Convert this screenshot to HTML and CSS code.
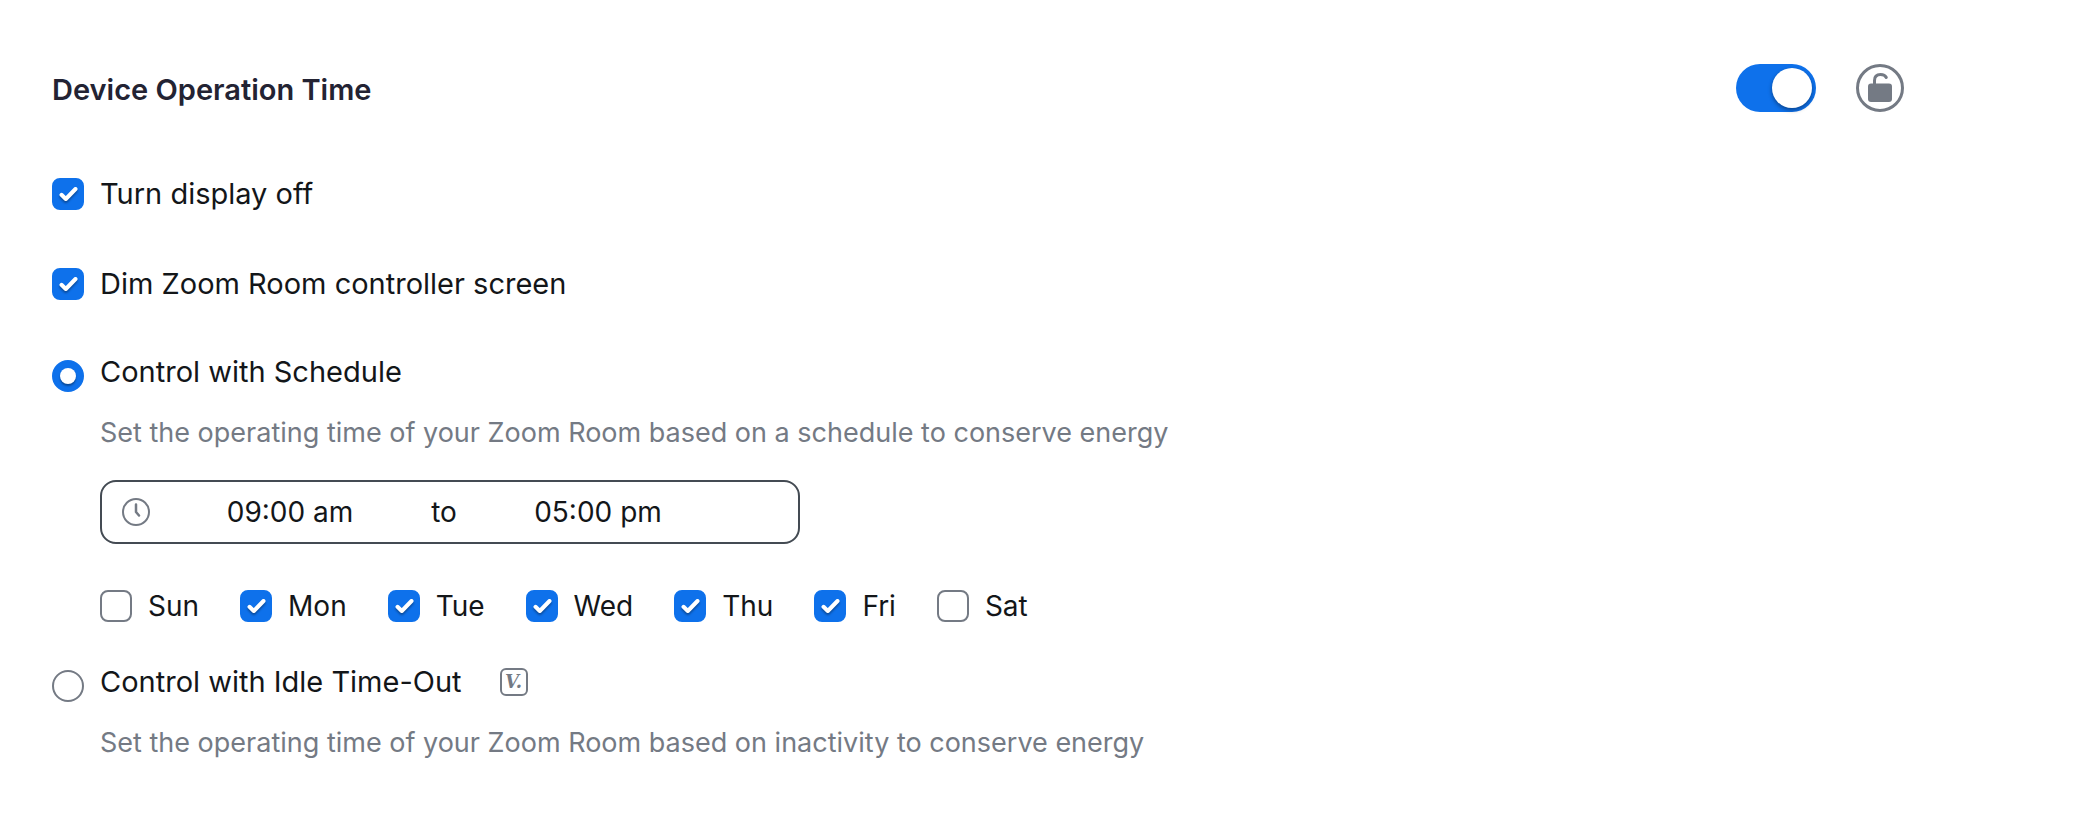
FILE: index.html
```
<!DOCTYPE html>
<html lang="en">
<head>
    <meta charset="UTF-8">
    <meta name="viewport" content="width=device-width, initial-scale=1.0">
    <title>Device Operation Time</title>
    <link rel="stylesheet" href="styles.css">
</head>
<body>
    <!-- check mark shared by all the tick boxes -->
    <svg class="sprite" aria-hidden="true">
        <symbol id="tick" viewBox="0 0 32 32">
            <path d="M9.5 16.8 L13.8 21 L23.5 11" fill="none" stroke="#fff" stroke-width="4" stroke-linecap="round" stroke-linejoin="round"/>
        </symbol>
    </svg>

    <main class="setting">
        <header class="setting-header">
            <h1 id="setting-title">Device Operation Time</h1>
            <div class="header-actions">
                <input type="checkbox" class="switch" role="switch" aria-labelledby="setting-title" checked>
                <button type="button" class="lock-button" aria-label="Unlocked">
                    <svg viewBox="0 0 48 48">
                        <circle cx="24" cy="24" r="22.5" fill="none" stroke="#747a84" stroke-width="3"/>
                        <rect x="12" y="19.5" width="24" height="18.5" rx="3" fill="#747a84"/>
                        <path d="M18.5 21 V16.5 C18.5 12.5 21 10.5 24.5 10.5 C27.5 10.5 29.5 11.8 30.3 13.5" fill="none" stroke="#747a84" stroke-width="3" stroke-linecap="round"/>
                    </svg>
                </button>
            </div>
        </header>

        <div class="options">
            <label class="option">
                <span class="box"><input type="checkbox" checked><svg class="tick"><use href="#tick"/></svg></span>
                Turn display off
            </label>
            <label class="option">
                <span class="box"><input type="checkbox" checked><svg class="tick"><use href="#tick"/></svg></span>
                Dim Zoom Room controller screen
            </label>
        </div>

        <section class="mode">
            <input type="radio" name="mode" id="mode-schedule" checked>
            <div class="mode-body">
                <label for="mode-schedule">Control with Schedule</label>
                <p>Set the operating time of your Zoom Room based on a schedule to conserve energy</p>
                <div class="time-range">
                    <svg class="clock" viewBox="0 0 28 28">
                        <g fill="none" stroke="#747a84" stroke-linecap="round" stroke-linejoin="round">
                            <circle cx="14" cy="14" r="13" stroke-width="2"/>
                            <path d="M14 6.5 V14 L17 17.5" stroke-width="2.5"/>
                        </g>
                    </svg>
                    <input type="text" value="09:00 am" aria-label="Start time">
                    <span class="to">to</span>
                    <input type="text" value="05:00 pm" aria-label="End time">
                </div>
                <div class="days">
                    <label class="option"><span class="box"><input type="checkbox"><svg class="tick"><use href="#tick"/></svg></span>Sun</label>
                    <label class="option"><span class="box"><input type="checkbox" checked><svg class="tick"><use href="#tick"/></svg></span>Mon</label>
                    <label class="option"><span class="box"><input type="checkbox" checked><svg class="tick"><use href="#tick"/></svg></span>Tue</label>
                    <label class="option"><span class="box"><input type="checkbox" checked><svg class="tick"><use href="#tick"/></svg></span>Wed</label>
                    <label class="option"><span class="box"><input type="checkbox" checked><svg class="tick"><use href="#tick"/></svg></span>Thu</label>
                    <label class="option"><span class="box"><input type="checkbox" checked><svg class="tick"><use href="#tick"/></svg></span>Fri</label>
                    <label class="option"><span class="box"><input type="checkbox"><svg class="tick"><use href="#tick"/></svg></span>Sat</label>
                </div>
            </div>
        </section>

        <section class="mode">
            <input type="radio" name="mode" id="mode-idle">
            <div class="mode-body">
                <div class="mode-title">
                    <label for="mode-idle">Control with Idle Time-Out</label>
                    <span class="version">V.</span>
                </div>
                <p>Set the operating time of your Zoom Room based on inactivity to conserve energy</p>
            </div>
        </section>
    </main>
</body>
</html>
```
FILE: styles.css
```
* {
    box-sizing: border-box;
}

body {
    margin: 0;
    background-color: #fff;
    color: #131619;
    font-family: Inter, "Liberation Sans", Arial, sans-serif;
    font-size: 29px;
    line-height: 32px;
}

.sprite {
    display: none;
}

.setting {
    padding: 64px 190px 48px 52px;
}

.setting-header {
    display: flex;
    justify-content: space-between;
    align-items: center;
}

.setting-header h1 {
    margin: 0;
    padding-top: 4px;
    color: #232333;
    font-size: 29px;
    font-weight: 600;
}

.header-actions {
    display: flex;
    gap: 40px;
}

/* on/off switch */
.switch {
    appearance: none;
    display: flex;
    width: 80px;
    height: 48px;
    margin: 0;
    padding: 4px;
    border-radius: 24px;
    background-color: #909096;
    cursor: pointer;
}

.switch::before {
    content: "";
    width: 40px;
    height: 40px;
    border-radius: 50%;
    background-color: #fff;
    box-shadow: 0 2px 4px rgba(0, 0, 0, 0.4);
}

.switch:checked {
    justify-content: flex-end;
    background-color: #0e71eb;
}

.lock-button {
    width: 48px;
    height: 48px;
    padding: 0;
    border: none;
    background: none;
    cursor: pointer;
}

.lock-button svg {
    display: block;
}

/* tick boxes */
.options {
    display: flex;
    flex-direction: column;
    align-items: flex-start;
    gap: 58px;
    padding: 66px 0 56px;
}

.option {
    display: flex;
    align-items: center;
    gap: 16px;
    cursor: pointer;
}

.box {
    display: grid;
}

.box input,
.box .tick {
    grid-area: 1 / 1;
    width: 32px;
    height: 32px;
    margin: 0;
}

.box input {
    appearance: none;
    border: 2px solid #747a84;
    border-radius: 8px;
}

.box input:checked {
    border-color: #0e71eb;
    background-color: #0e71eb;
}

.tick {
    visibility: hidden;
    pointer-events: none;
    filter: drop-shadow(0 2px 1px rgba(0, 0, 0, 0.35));
}

.box input:checked + .tick {
    visibility: visible;
}

/* radio options */
.mode {
    display: flex;
    align-items: flex-start;
    gap: 16px;
}

.mode > input {
    appearance: none;
    flex: none;
    display: grid;
    place-items: center;
    width: 32px;
    height: 32px;
    margin: 4px 0 0;
    border: 2px solid #747a84;
    border-radius: 50%;
}

.mode > input:checked {
    border-color: #0e71eb;
    background-color: #0e71eb;
}

.mode > input:checked::before {
    content: "";
    width: 16px;
    height: 16px;
    border-radius: 50%;
    background-color: #fff;
    box-shadow: 0 2px 2px rgba(0, 0, 0, 0.35);
}

.mode p {
    margin: 29px 0 31px;
    color: #747a84;
    font-size: 27px;
}

.mode-title {
    display: flex;
    align-items: center;
    gap: 38px;
}

.version {
    width: 28px;
    height: 28px;
    border: 2px solid #747a84;
    border-radius: 6px;
    color: #747a84;
    font-family: "DejaVu Serif", "Liberation Serif", serif;
    font-size: 18px;
    font-style: italic;
    font-weight: 700;
    line-height: 24px;
    text-align: center;
}

/* start and end time in one frame */
.time-range {
    display: flex;
    align-items: center;
    width: 700px;
    max-width: 100%;
    height: 64px;
    padding: 0 20px;
    border: 2px solid #444b53;
    border-radius: 16px;
    font-size: 28px;
}

.time-range input {
    width: 220px;
    padding: 0;
    border: none;
    background: none;
    color: inherit;
    font: inherit;
    text-align: center;
}

.clock {
    flex: none;
    width: 28px;
    height: 28px;
    margin-right: 30px;
}

.to {
    width: 88px;
    text-align: center;
}

.days {
    display: flex;
    flex-wrap: wrap;
    gap: 41px;
    padding: 46px 0 44px;
    font-size: 28px;
}
```
